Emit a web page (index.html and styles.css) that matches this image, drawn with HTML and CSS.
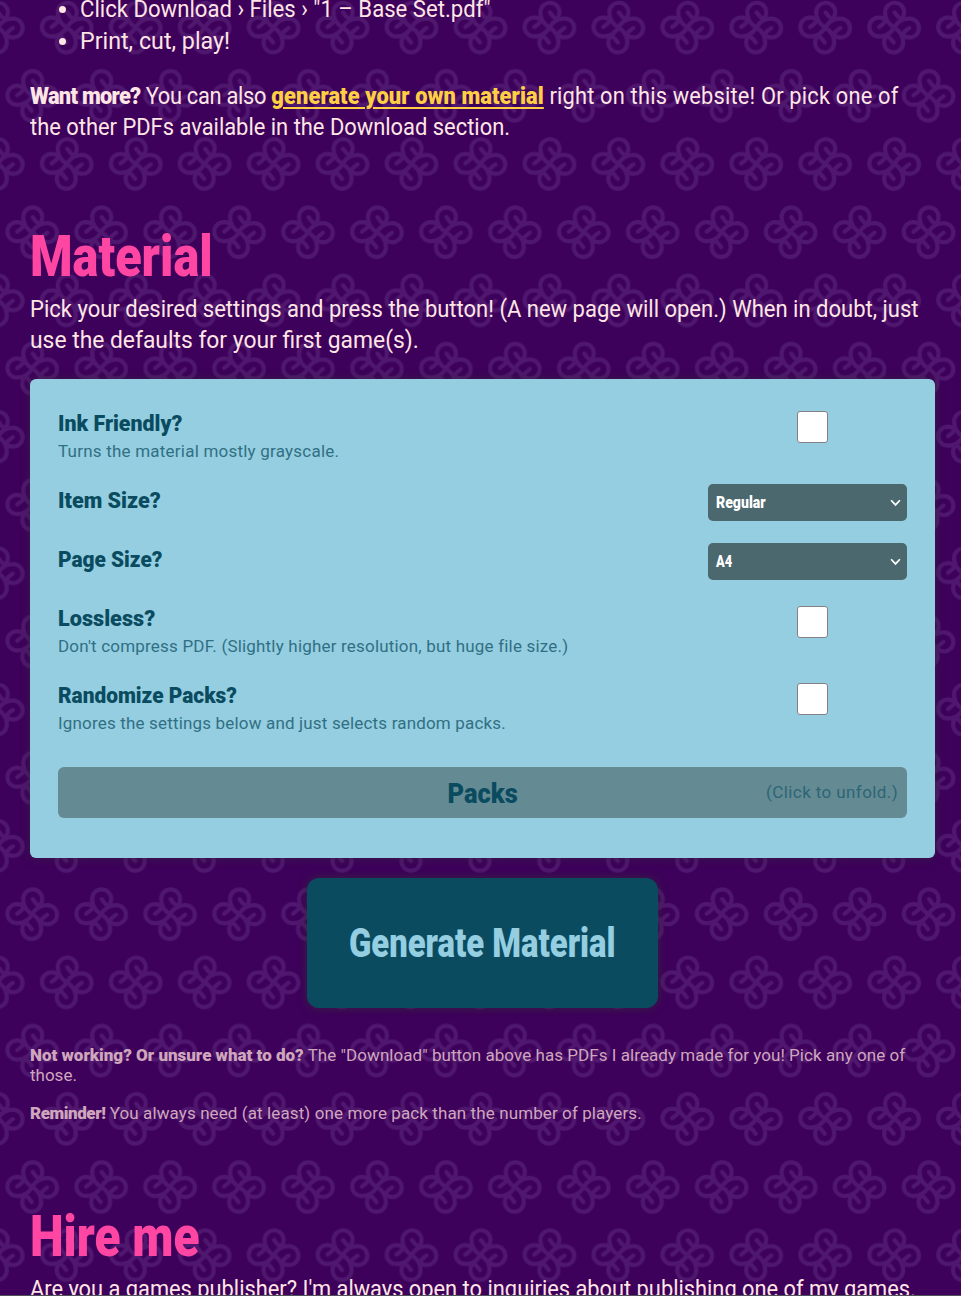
FILE: index.html
```html
<!DOCTYPE html>
<html lang="en">
<head>
<meta charset="utf-8">
<title>Material</title>
<link rel="stylesheet" href="styles.css">
</head>
<body>
<svg class="backdrop" aria-hidden="true">
  <defs>
    <g id="knot" fill="none" stroke="#4f176e" stroke-width="4.2" stroke-linecap="round" stroke-linejoin="round">
      <path id="curl" d="M0 0C-5-3-9-8-9-15C-9-21-4.500-24.800 .5-24.800C6.500-24.800 10-20 10-15.500C10-12 9-9.500 6.500-8.800C4-9.500 3-12 .5-15"/>
      <use href="#curl" transform="rotate(90)"/>
      <use href="#curl" transform="rotate(180)"/>
      <use href="#curl" transform="rotate(270)"/>
    </g>
    <pattern id="weave" x="-2.2" y="-7" width="68.95" height="136.4" patternUnits="userSpaceOnUse">
      <use href="#knot" x="34.4" y="102.8"/>
      <use href="#knot" x="0" y="34.5"/>
      <use href="#knot" x="68.95" y="34.5"/>
    </pattern>
  </defs>
  <rect width="100%" height="100%" fill="url(#weave)"/>
</svg>
<main class="page">
  <ul class="steps">
    <li><span class="fit s1">Click Download › Files › "1 – Base Set.pdf"</span></li>
    <li><span class="fit s2">Print, cut, play!</span></li>
  </ul>
  <p class="copy more"><span class="fit m1"><b>Want more?</b><span class="lead"> You can also </span><a class="link">generate your own material</a> right on this website! Or pick one of</span><br><span class="fit m2">the other PDFs available in the Download section.</span></p>
  <h2 class="title material"><span class="fit t1">Material</span></h2>
  <p class="copy"><span class="fit p1">Pick your desired settings and press the button! (A new page will open.) When in doubt, just</span><br><span class="fit p2">use the defaults for your first game(s).</span></p>
  <section class="settings">
    <div class="row described"><div><div class="label"><span class="fit l1">Ink Friendly?</span></div><div class="hint"><span class="fit h1">Turns the material mostly grayscale.</span></div></div><div class="control"><i class="box"></i></div></div>
    <div class="row"><div class="label"><span class="fit l2">Item Size?</span></div><div class="select"><span class="fit o1">Regular</span><svg class="chev" viewBox="0 0 10 7"><path d="M1 1l4 4.2L9 1"/></svg></div></div>
    <div class="row"><div class="label"><span class="fit l3">Page Size?</span></div><div class="select"><span class="fit o2">A4</span><svg class="chev" viewBox="0 0 10 7"><path d="M1 1l4 4.2L9 1"/></svg></div></div>
    <div class="row described"><div><div class="label"><span class="fit l4">Lossless?</span></div><div class="hint"><span class="fit h2">Don't compress PDF. (Slightly higher resolution, but huge file size.)</span></div></div><div class="control"><i class="box"></i></div></div>
    <div class="row described"><div><div class="label"><span class="fit l5">Randomize Packs?</span></div><div class="hint"><span class="fit h3">Ignores the settings below and just selects random packs.</span></div></div><div class="control"><i class="box"></i></div></div>
    <div class="packs"><span></span><span class="fit packs-title">Packs</span><span class="unfold"><span class="fit u1">(Click to unfold.)</span></span></div>
  </section>
  <div class="generate"><span class="fit g1">Generate Material</span></div>
  <div class="notes">
    <p><span class="fit n1"><b>Not working? Or unsure what to do?</b> The "Download" button above has PDFs I already made for you! Pick any one of</span><br><span class="fit n2">those.</span></p>
    <p><span class="fit n3"><b>Reminder!</b> You always need (at least) one more pack than the number of players.</span></p>
  </div>
  <h2 class="title hire"><span class="fit t2">Hire me</span></h2>
  <p class="copy"><span class="fit r1">Are you a games publisher? I'm always open to inquiries about publishing one of my games.</span></p>
</main>
</body>
</html>
```
FILE: styles.css
```css
* { box-sizing: border-box; }
html { overflow: hidden; background: #3d005b; }
body { margin: 0; height: 1296px; overflow: hidden; position: relative; background: #3d005b; border-bottom: 1px solid #50505a; color: #ffe5e5; font-family: Roboto, "Liberation Sans", sans-serif; }
.backdrop { position: absolute; inset: 0; width: 100%; height: 100%; }
.page { position: relative; width: 905px; margin: 0 0 0 30px; }
.fit { display: inline-block; white-space: nowrap; transform-origin: 0 50%; }
.steps { margin: -6px 0 24px; padding: 0 0 0 50px; font-size: 23px; line-height: 31px; }
.steps li { height: 31.5px; }
.copy { margin: 0; font-size: 23px; line-height: 31px; white-space: nowrap; }
.link { color: #ffcf43; font-weight: 900; text-decoration: underline; text-decoration-thickness: 2px; text-underline-offset: 3px; letter-spacing: .1px; }
.title { margin: 0; color: #ff46a3; font-size: 58px; font-weight: 900; line-height: 58px; height: 67px; white-space: nowrap; }
.material { margin-top: 84px; }
.settings { width: 905px; margin-top: 23px; height: 479px; padding: 28px; background: #94cee0; border-radius: 6px; color: #0a4b60; box-shadow: 0 0 10px rgba(50,50,50,.6); }
.row { height: 59px; display: flex; justify-content: space-between; align-items: flex-start; }
.described { height: 77px; }
.label { font-size: 22px; line-height: 32px; padding-top: 1px; font-weight: 900; }
.hint { font-size: 17px; line-height: 24px; margin-top: -1px; opacity: .72; }
.control { width: 189px; display: flex; justify-content: center; padding-top: 4px; }
.box { width: 31.5px; height: 31.5px; background: #fff; border: 1px solid #858085; border-radius: 3px; }
.select { display: flex; width: 199px; height: 37px; align-items: center; justify-content: space-between; padding: 0 6px 0 8px; background: #4a686e; border-radius: 5px; color: #fff; font-size: 16px; font-weight: 900; }
.chev { width: 11px; height: 8px; fill: none; stroke: #fff; stroke-width: 1.6; }
.packs { display: grid; grid-template-columns: 1fr auto 1fr; align-items: center; height: 51px; margin-top: 11px; padding: 0 9px; background: #648b94; border-radius: 6px; }
.packs-title { font-size: 28px; font-weight: 900; padding-top: 2px; transform-origin: 50% 50%; transform: scaleX(.91); }
.unfold { text-align: right; font-size: 17px; color: #2d6574; padding-bottom: 2px; }
.generate { display: flex; align-items: center; width: 351px; height: 130px; margin: 20px 0 0 277px; padding-left: 42px; background: #0a4b60; color: #94cee0; border-radius: 12px; font-size: 40px; font-weight: 900; box-shadow: 0 0 10px rgba(50,50,50,.7); }
.notes { margin-top: 37px; color: #cfa7bd; font-size: 17px; line-height: 20px; }
.notes p { margin: 0 0 18px; white-space: nowrap; }
.notes b, .copy b { font-weight: 900; }
.hire { margin-top: 84px; }

.s1 { transform: scaleX(.962); }
.s2 { transform: scaleX(1.01); }
.m1 { transform: scaleX(.949); letter-spacing: .2px; }
.m1 b { letter-spacing: -.75px; }
.lead { letter-spacing: -.3px; }
.m2 { transform: scaleX(.952); }
.t1 { transform: scaleX(.838); }
.t2 { transform: scaleX(.824); }
.p1 { transform: scaleX(.957); }
.p2 { transform: scaleX(.993); }
.l1 { transform: scaleX(.97); }
.l2 { transform: scaleX(.98); }
.l3 { transform: scaleX(.947); }
.l4 { transform: scaleX(.985); }
.l5 { transform: scaleX(.948); }
.h1 { letter-spacing: .22px; }
.h2 { letter-spacing: .19px; }
.h3 { letter-spacing: .17px; }
.o1 { transform: scaleX(.88); }
.o2 { transform: scaleX(.8); }
.u1 { letter-spacing: .4px; }
.g1 { transform: scaleX(.82); }
.n1 { letter-spacing: .05px; }
.n1 b { letter-spacing: -.01px; }
.n3 { letter-spacing: .1px; }
.n3 b { letter-spacing: -.42px; }
.r1 { transform: scaleX(.949); }
```
